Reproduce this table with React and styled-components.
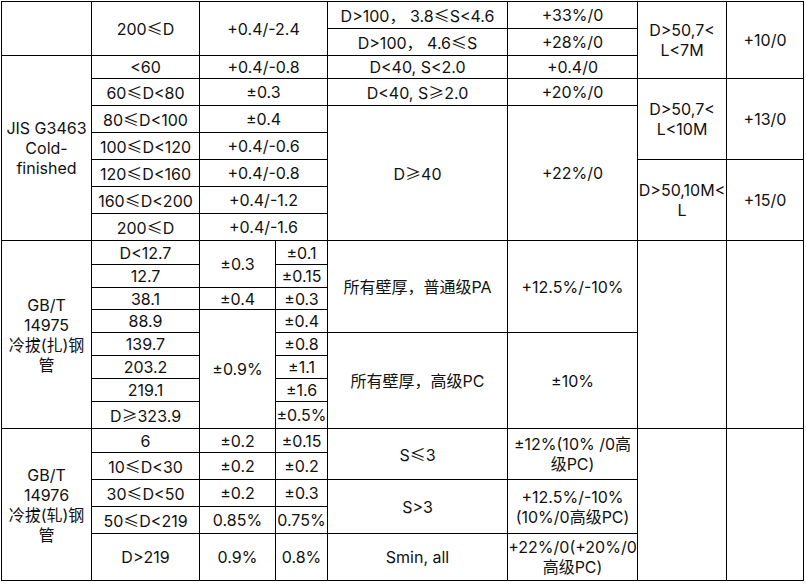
import React from 'react';
import styled, {createGlobalStyle} from 'styled-components';

const Global = createGlobalStyle`
  html, body {
    margin: 0;
    padding: 0;
    background: #fff;
  }
  body {
    font-family: Inter, "Noto Sans CJK SC", sans-serif;
  }
`

const Wrap = styled.div`
  padding: 1px 0 0 1px;
`

const Table = styled.table`
  border-collapse: collapse;
  table-layout: fixed;
  width: 803px;
  font-size: 16px;
  line-height: 20px;
  color: #111;
`

const Row = styled.tr`
  height: ${p => p.h}px;
`

const Cell = styled.td`
  border: 1px solid #000;
  padding: 0;
  text-align: center;
  vertical-align: middle;
  white-space: nowrap;
`

const Sym = styled.span`
  font-family: "Noto Sans CJK SC", sans-serif;
`

// widths of the 8 grid columns
const cols = [90, 108, 76, 52, 180, 130, 89, 77]

// ≤ ≥ and the full width comma come from the CJK face, as in the source doc
let fmt = (s) => {
  let parts = s.split(/([≤≥，])/)
  return parts.map((p, i) => /[≤≥，]/.test(p) ? <Sym key={i}>{p}</Sym> : p)
}

let lines = (t) => t.split('\n').map((l, i) => (
  <React.Fragment key={i}>
    {i > 0 && <br/>}
    {fmt(l)}
  </React.Fragment>
))

// each row: [height, cells]; cell = [text, rowSpan, colSpan]
const rows = [
  [27, [['', 2], ['200≤D', 2], ['+0.4/-2.4', 2, 2], ['D>100， 3.8≤S<4.6'], ['+33%/0'], ['D>50,7<\nL<7M', 3], ['+10/0', 3]]],
  [27, [['D>100，  4.6≤S'], ['+28%/0']]],
  [23, [['JIS G3463\nCold-\nfinished', 7], ['<60'], ['+0.4/-0.8', 1, 2], ['D<40, S<2.0'], ['+0.4/0']]],
  [27, [['60≤D<80'], ['±0.3', 1, 2], ['D<40, S≥2.0'], ['+20%/0'], ['D>50,7<\nL<10M', 3], ['+13/0', 3]]],
  [27, [['80≤D<100'], ['±0.4', 1, 2], ['D≥40', 5], ['+22%/0', 5]]],
  [27, [['100≤D<120'], ['+0.4/-0.6', 1, 2]]],
  [27, [['120≤D<160'], ['+0.4/-0.8', 1, 2], ['D>50,10M<\nL', 3], ['+15/0', 3]]],
  [27, [['160≤D<200'], ['+0.4/-1.2', 1, 2]]],
  [27, [['200≤D'], ['+0.4/-1.6', 1, 2]]],
  [24, [['GB/T\n14975\n冷拔(扎)钢\n管', 8], ['D<12.7'], ['±0.3', 2], ['±0.1'], ['所有壁厚，普通级PA', 4], ['+12.5%/-10%', 4], ['', 8], ['', 8]]],
  [23, [['12.7'], ['±0.15']]],
  [22, [['38.1'], ['±0.4'], ['±0.3']]],
  [23, [['88.9'], ['±0.9%', 5], ['±0.4']]],
  [23, [['139.7'], ['±0.8'], ['所有壁厚，高级PC', 4], ['±10%', 4]]],
  [23, [['203.2'], ['±1.1']]],
  [23, [['219.1'], ['±1.6']]],
  [27, [['D≥323.9'], ['±0.5%']]],
  [24, [['GB/T\n14976\n冷拔(轧)钢\n管', 5], ['6'], ['±0.2'], ['±0.15'], ['S≤3', 2], ['±12%(10% /0高\n级PC)', 2], ['', 5], ['', 5]]],
  [27, [['10≤D<30'], ['±0.2'], ['±0.2']]],
  [27, [['30≤D<50'], ['±0.2'], ['±0.3'], ['S>3', 2], ['+12.5%/-10%\n(10%/0高级PC)', 2]]],
  [27, [['50≤D<219'], ['0.85%'], ['0.75%']]],
  [47, [['D>219'], ['0.9%'], ['0.8%'], ['Smin, all'], ['+22%/0(+20%/0\n高级PC)']]],
]

const App = () => {
  return (
    <Wrap>
      <Global/>
      <Table>
        <colgroup>
          {cols.map((w, i) => <col key={i} style={{width: w}}/>)}
        </colgroup>
        <tbody>
          {rows.map(([h, cells], i) => (
            <Row key={i} h={h}>
              {cells.map(([t, rs, cs], j) => (
                <Cell key={j} rowSpan={rs || 1} colSpan={cs || 1}>{lines(t)}</Cell>
              ))}
            </Row>
          ))}
        </tbody>
      </Table>
    </Wrap>
  );
};

export default App;
